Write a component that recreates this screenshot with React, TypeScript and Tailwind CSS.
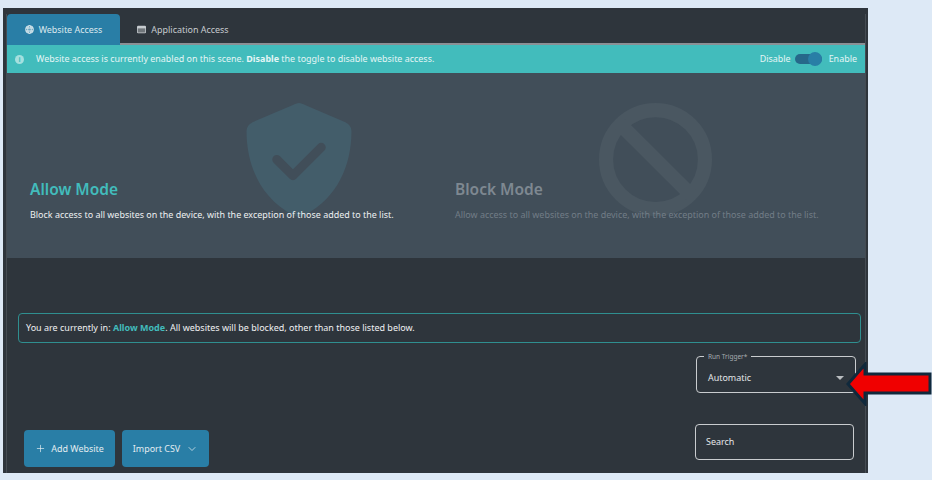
import React from 'react';
import { ChevronDown, Plus } from 'lucide-react';

const App: React.FC = () => {
    return (
        <div className="relative w-[932px] h-[480px] overflow-hidden bg-[#dde9f6] pt-2 pl-[3px] font-['Noto_Sans',sans-serif] text-white">
            <div className="w-[865px] h-[465px] bg-[#2e353c] pt-1.5 pl-[3px] pr-[2px] overflow-hidden">
                <div className="h-full border-x border-[#454c53]">
                    {/* Tabs */}
                    <div className="flex h-[31px] border-b-2 border-[#8b9095] text-[8.95px]">
                        <div className="w-[113px] h-[31px] bg-[#297ea6] rounded-t flex items-center justify-center gap-[5px] text-[#dce9ef]">
                            <svg width="9" height="9" viewBox="0 0 12 12" fill="none" stroke="#dce9ef" strokeWidth="1.3">
                                <circle cx="6" cy="6" r="5.2" fill="#dce9ef" fillOpacity="0.35" />
                                <ellipse cx="6" cy="6" rx="2.4" ry="5.2" />
                                <path d="M1 4h10M1 8h10" />
                            </svg>
                            Website Access
                        </div>
                        <div className="w-[126px] h-[31px] flex items-center justify-center gap-[5px] text-[#c6cbcf]">
                            <svg width="9" height="9" viewBox="0 0 12 12">
                                <rect x="0" y="1" width="12" height="10" rx="1.5" fill="#c6cbcf" />
                                <rect x="1" y="4.5" width="10" height="5.5" fill="#70767b" />
                            </svg>
                            Application Access
                        </div>
                    </div>

                    {/* Alert */}
                    <div className="h-[28px] bg-[#42bcbc] flex items-center pl-[8px] pr-2 text-[8.95px] text-[#e4f6f6]">
                        <span className="w-[9px] h-[9px] rounded-full bg-[#a5e0df] text-[#42bcbc] text-[7px] font-bold leading-[9px] text-center">i</span>
                        <span className="ml-[12px]">
                            Website access is currently enabled on this scene. <b className="font-bold">Disable</b> the toggle to disable website access.
                        </span>
                        <span className="ml-auto">Disable</span>
                        <span className="relative w-[27px] h-[10px] ml-1 rounded-full bg-[#26688a]">
                            <span className="absolute right-0 top-[-2px] w-[14px] h-[14px] rounded-full bg-[#297ea6]" />
                        </span>
                        <span className="ml-[7px]">Enable</span>
                    </div>

                    {/* Mode panels */}
                    <div className="h-[185px] bg-[#414e59] grid grid-cols-2">
                        <div className="relative pl-[23px] pt-[105px]">
                            <svg className="absolute left-[239px] top-[30px]" width="106" height="114" viewBox="0 0 104 113">
                                <path d="M52 0 C54 0 56 1 58 2 L98 19 C102 21 104 24 104 28 C104 62 90 94 58 111 C54 113 50 113 46 111 C14 94 0 62 0 28 C0 24 2 21 6 19 L46 2 C48 1 50 0 52 0 Z" fill="#435d6a" />
                                <path d="M30 56 L46 72 L74 44" fill="none" stroke="#414e59" strokeWidth="9" strokeLinecap="round" strokeLinejoin="round" />
                            </svg>
                            <h2 className="relative text-[15.5px] leading-[22px] font-semibold text-[#42bcbc]">Allow Mode</h2>
                            <p className="relative mt-[8px] text-[8.95px] leading-[14px] text-[#eef0f2]">
                                Block access to all websites on the device, with the exception of those added to the list.
                            </p>
                        </div>
                        <div className="relative pl-[19px] pt-[105px]">
                            <svg className="absolute left-[163px] top-[30px]" width="113" height="113" viewBox="0 0 112 112" fill="none" stroke="#4a5761" strokeWidth="14">
                                <circle cx="56" cy="56" r="49" />
                                <path d="M21 21 L91 91" />
                            </svg>
                            <h2 className="relative text-[15.5px] leading-[22px] font-semibold text-[#7e8891]">Block Mode</h2>
                            <p className="relative mt-[8px] text-[8.95px] leading-[14px] text-[#727d87]">
                                Allow access to all websites on the device, with the exception of those added to the list.
                            </p>
                        </div>
                    </div>

                    {/* Current mode */}
                    <div className="mt-[55px] ml-[11px] w-[843px] h-[30px] border border-[#2f8f90] rounded flex items-center pl-[7px] text-[9px] text-[#eef0f2]">
                        <span>
                            You are currently in: <b className="font-bold text-[#42bcbc]">Allow Mode</b>. All websites will be blocked, other than those listed below.
                        </span>
                    </div>

                    {/* Run trigger */}
                    <div className="flex justify-end mt-[13px] pr-[9px]">
                        <div className="relative w-[160px] h-[37px] border border-[#c9cccf] rounded flex items-center justify-between pt-[6px] pl-[11px] pr-[11px] text-[8.95px] text-[#e4e6e8]">
                            <span className="absolute left-[7px] top-[-5px] bg-[#2e353c] px-1 text-[6.5px] leading-[9px] text-[#a7acb0]">Run Trigger*</span>
                            Automatic
                            <span className="w-0 h-0 border-x-[4px] border-x-transparent border-t-[4px] border-t-[#b9bdc0]" />
                        </div>
                    </div>

                    {/* Actions */}
                    <div className="flex items-start justify-between mt-[31px] pl-[17px] pr-[11px]">
                        <div className="flex gap-[7px] mt-[6px] text-[8.95px] text-[#e4edf1]">
                            <div className="w-[91px] h-[37px] bg-[#297ea6] rounded flex items-center justify-center gap-[5px]">
                                <Plus size={11} strokeWidth={1.5} />
                                Add Website
                            </div>
                            <div className="w-[87px] h-[37px] bg-[#297ea6] rounded flex items-center justify-center gap-[6px]">
                                Import CSV
                                <ChevronDown size={12} strokeWidth={1.5} />
                            </div>
                        </div>
                        <div className="w-[159px] h-[36px] border border-[#c9cccf] rounded flex items-center pl-[10px] text-[8.95px] text-[#e4e6e8]">
                            Search
                        </div>
                    </div>
                </div>
            </div>

            {/* Annotation arrow */}
            <svg className="absolute left-[845px] top-[362px]" width="87" height="44" viewBox="0 0 87 44">
                <path d="M3 22 L20 2.5 L20 12 L85 12 L85 31 L20 31 L20 41.5 Z" fill="#f00000" stroke="#10293c" strokeWidth="3" />
            </svg>
        </div>
    );
};

export default App;
